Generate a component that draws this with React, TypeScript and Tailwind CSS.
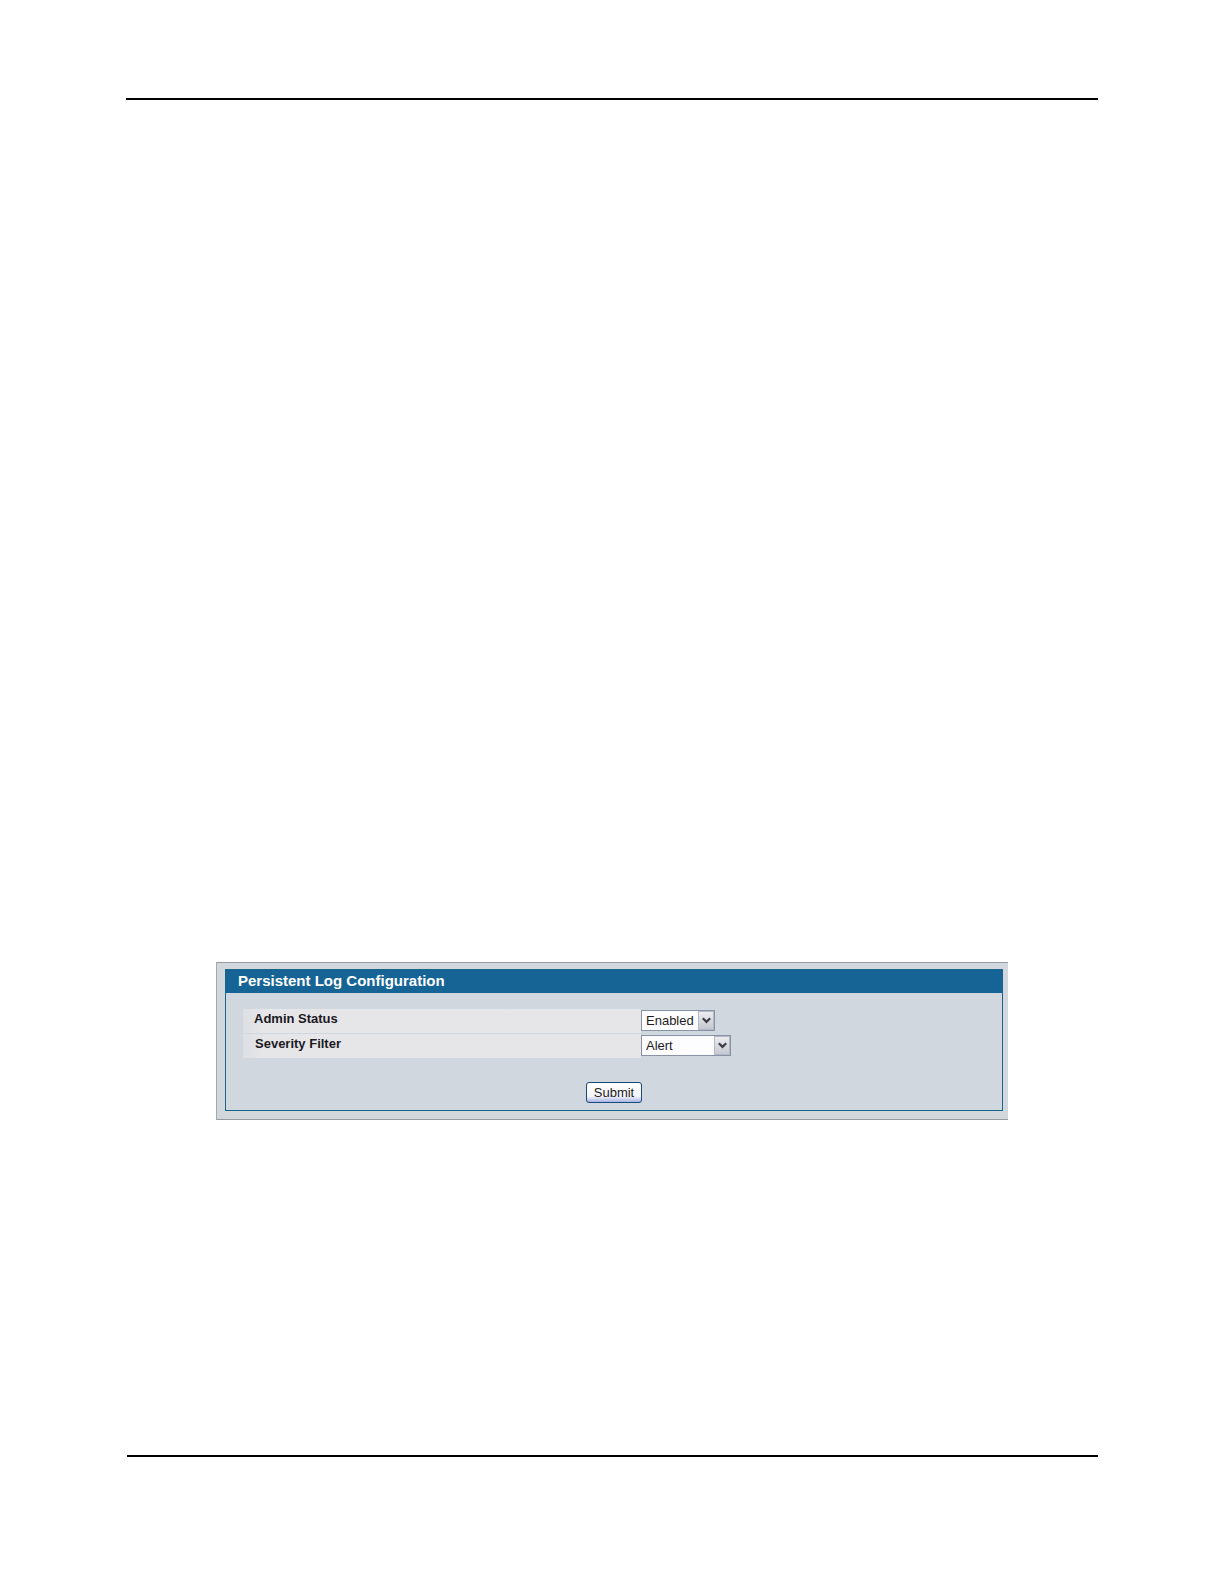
function SelectBox({ id, options, width }: { id: string; options: string[]; width: string }) {
  return (
    <div className={`relative h-[21px] ${width}`}>
      <select
        id={id}
        defaultValue={options[0]}
        className="block h-full w-full appearance-none rounded-none border border-[#8a93a5] bg-[#fdfdff] pt-px pl-1 text-[13px] leading-[18px] text-[#1c1c22] outline-none"
      >
        {options.map((o) => (
          <option key={o}>{o}</option>
        ))}
      </select>
      <span className="pointer-events-none absolute top-px right-px bottom-px flex w-4 items-center justify-center border border-[#b4b8c4] bg-linear-to-b from-[#ececf0] to-[#c6c8d2]">
        <svg width="9" height="7" viewBox="0 0 9 7" fill="none" stroke="#3c3c46" strokeWidth="2.2">
          <path d="M0.8 1.2 4.5 4.9 8.2 1.2" />
        </svg>
      </span>
    </div>
  );
}

export default function App() {
  return (
    <main className="flex flex-col bg-white px-[126px] pt-[98px] pb-[127px] font-['Liberation_Sans',Arial,sans-serif]">
      <hr className="h-[2px] border-0 bg-black" />
      <section className="mx-[90px] mt-[862px] border-y border-l border-y-[#96999e] border-l-[#a5a9b0] bg-[#d2d7dc] pt-[6px] pr-[5px] pb-2 pl-2">
        <form className="border border-[#1a648c] bg-[#d0d7de]" onSubmit={(e) => e.preventDefault()}>
          <h1 className="h-[23px] bg-[#156495] pl-3 text-[15px] leading-[22px] font-bold text-white">
            Persistent Log Configuration
          </h1>
          <div className="flex flex-col gap-px px-[17px] pt-4">
            <div className="flex h-6">
              <label htmlFor="admin" className="w-[398px] bg-linear-to-r from-[#dcdfe3] via-[#e6e6e9] via-5% to-[#e6e6e9] pl-[11px] text-[13px] leading-5 font-bold text-[#1a1a1f]">
                Admin Status
              </label>
              <div className="pt-px">
                <SelectBox id="admin" width="w-[74px]" options={['Enabled', 'Disabled']} />
              </div>
            </div>
            <div className="flex h-6">
              <label htmlFor="severity" className="w-[398px] bg-linear-to-r from-[#dcdfe3] via-[#e6e6e9] via-5% to-[#e6e6e9] pl-3 text-[13px] leading-5 font-bold text-[#1a1a1f]">
                Severity Filter
              </label>
              <div className="pt-px">
                <SelectBox
                  id="severity"
                  width="w-[90px]"
                  options={['Alert', 'Emergency', 'Critical', 'Error', 'Warning', 'Notice', 'Info', 'Debug']}
                />
              </div>
            </div>
          </div>
          <div className="flex justify-center pt-6 pb-[7px]">
            <button
              type="submit"
              className="h-[21px] w-14 rounded-[3px] border border-[#1c4a78] bg-linear-to-b from-white via-[#f4f4fa] via-70% to-[#a9b4e6] text-[13px] leading-[18px] text-[#1c1c22]"
            >
              Submit
            </button>
          </div>
        </form>
      </section>
      <hr className="mt-[335px] ml-px h-[2px] border-0 bg-black" />
    </main>
  );
}
